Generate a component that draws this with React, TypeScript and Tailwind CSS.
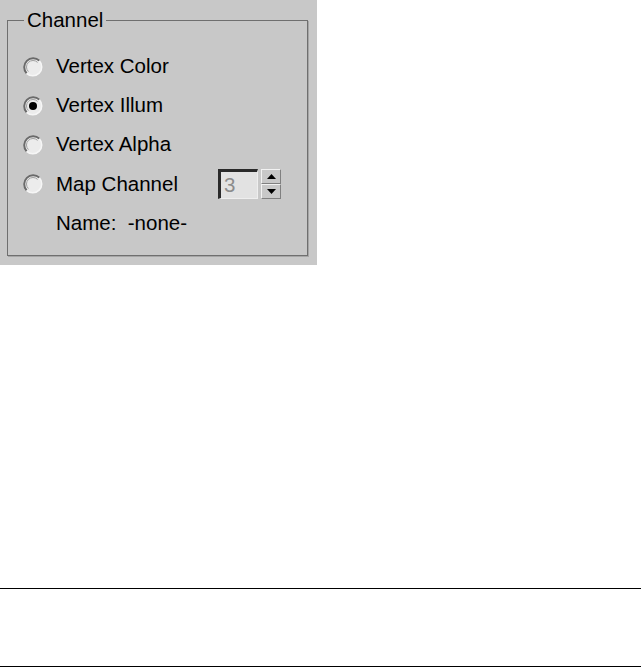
import { useState } from "react";

type Channel = "color" | "illum" | "alpha" | "map";

function Radio({ checked }: { checked: boolean }) {
  return (
    <svg width="20" height="20" viewBox="0 0 20 20" className="shrink-0">
      <circle cx="10" cy="10" r="9" fill="#ececec" />
      <path d="M3.64 16.36 A9 9 0 0 1 16.36 3.64" fill="none" stroke="#6a6a6a" strokeWidth="2" />
      <path d="M16.36 3.64 A9 9 0 0 1 3.64 16.36" fill="none" stroke="#f6f6f6" strokeWidth="1.5" />
      <path d="M5.4 14.6 A6.5 6.5 0 0 1 14.6 5.4" fill="none" stroke="#a0a0a0" strokeWidth="1" />
      {checked && <circle cx="10" cy="10" r="4" fill="#000000" />}
    </svg>
  );
}

export default function App() {
  const [channel, setChannel] = useState<Channel>("illum");
  const [mapChannel] = useState(3);

  const options: { id: Channel; label: string }[] = [
    { id: "color", label: "Vertex Color" },
    { id: "illum", label: "Vertex Illum" },
    { id: "alpha", label: "Vertex Alpha" },
  ];

  return (
    <div className="w-[641px] bg-white" style={{ fontFamily: '"Liberation Sans", Arial, sans-serif' }}>
      <div className="w-[317px] h-[265px] bg-[#c8c8c8] pt-[20px] pl-[7px] text-[20.5px] text-black">
        <div className="relative w-[301px] h-[236px] border border-[#6f6f6f] shadow-[1px_1px_0_#a6a6a6] pt-[26px] pl-[15px]">
          <span className="absolute left-[16px] -top-[13px] bg-[#c8c8c8] px-[3px] leading-[24px]">
            Channel
          </span>
          <div className="flex flex-col">
            {options.map((o) => (
              <div
                key={o.id}
                className="h-[39px] flex items-center gap-[13px] cursor-default"
                onClick={() => setChannel(o.id)}
              >
                <Radio checked={channel === o.id} />
                <span className="leading-none">{o.label}</span>
              </div>
            ))}
            <div className="h-[40px] flex items-center gap-[13px]" onClick={() => setChannel("map")}>
              <Radio checked={channel === "map"} />
              <span className="leading-none w-[162px]">Map Channel</span>
              <div className="flex items-center gap-[3px] -ml-[13px]">
                <div className="w-[40px] h-[30px] bg-[#e2e2e2] border-t-[3px] border-l-[3px] border-b border-r border-t-[#2a2a2a] border-l-[#2a2a2a] border-b-[#eeeeee] border-r-[#eeeeee] flex items-center pl-[3px] text-[#8c8c8c] leading-none">
                  {mapChannel}
                </div>
                <div className="flex flex-col w-[20px] h-[30px]">
                  <div className="h-[15px] bg-[#c8c8c8] border-t border-l border-b border-r border-t-[#f2f2f2] border-l-[#f2f2f2] border-b-[#808080] border-r-[#808080] flex items-center justify-center">
                    <svg width="9" height="5" viewBox="0 0 9 5">
                      <path d="M0 5 L4.5 0 L9 5 Z" fill="#000" />
                    </svg>
                  </div>
                  <div className="h-[15px] bg-[#c8c8c8] border-t border-l border-b border-r border-t-[#f2f2f2] border-l-[#f2f2f2] border-b-[#808080] border-r-[#808080] flex items-center justify-center">
                    <svg width="9" height="5" viewBox="0 0 9 5">
                      <path d="M0 0 L9 0 L4.5 5 Z" fill="#000" />
                    </svg>
                  </div>
                </div>
              </div>
            </div>
            <div className="h-[39px] flex items-center pl-[33px]">
              <span className="leading-none">Name:&nbsp; -none-</span>
            </div>
          </div>
        </div>
      </div>
      <div className="h-[323px]" />
      <div className="h-px bg-black" />
      <div className="h-[77px]" />
      <div className="h-px bg-black" />
    </div>
  );
}
